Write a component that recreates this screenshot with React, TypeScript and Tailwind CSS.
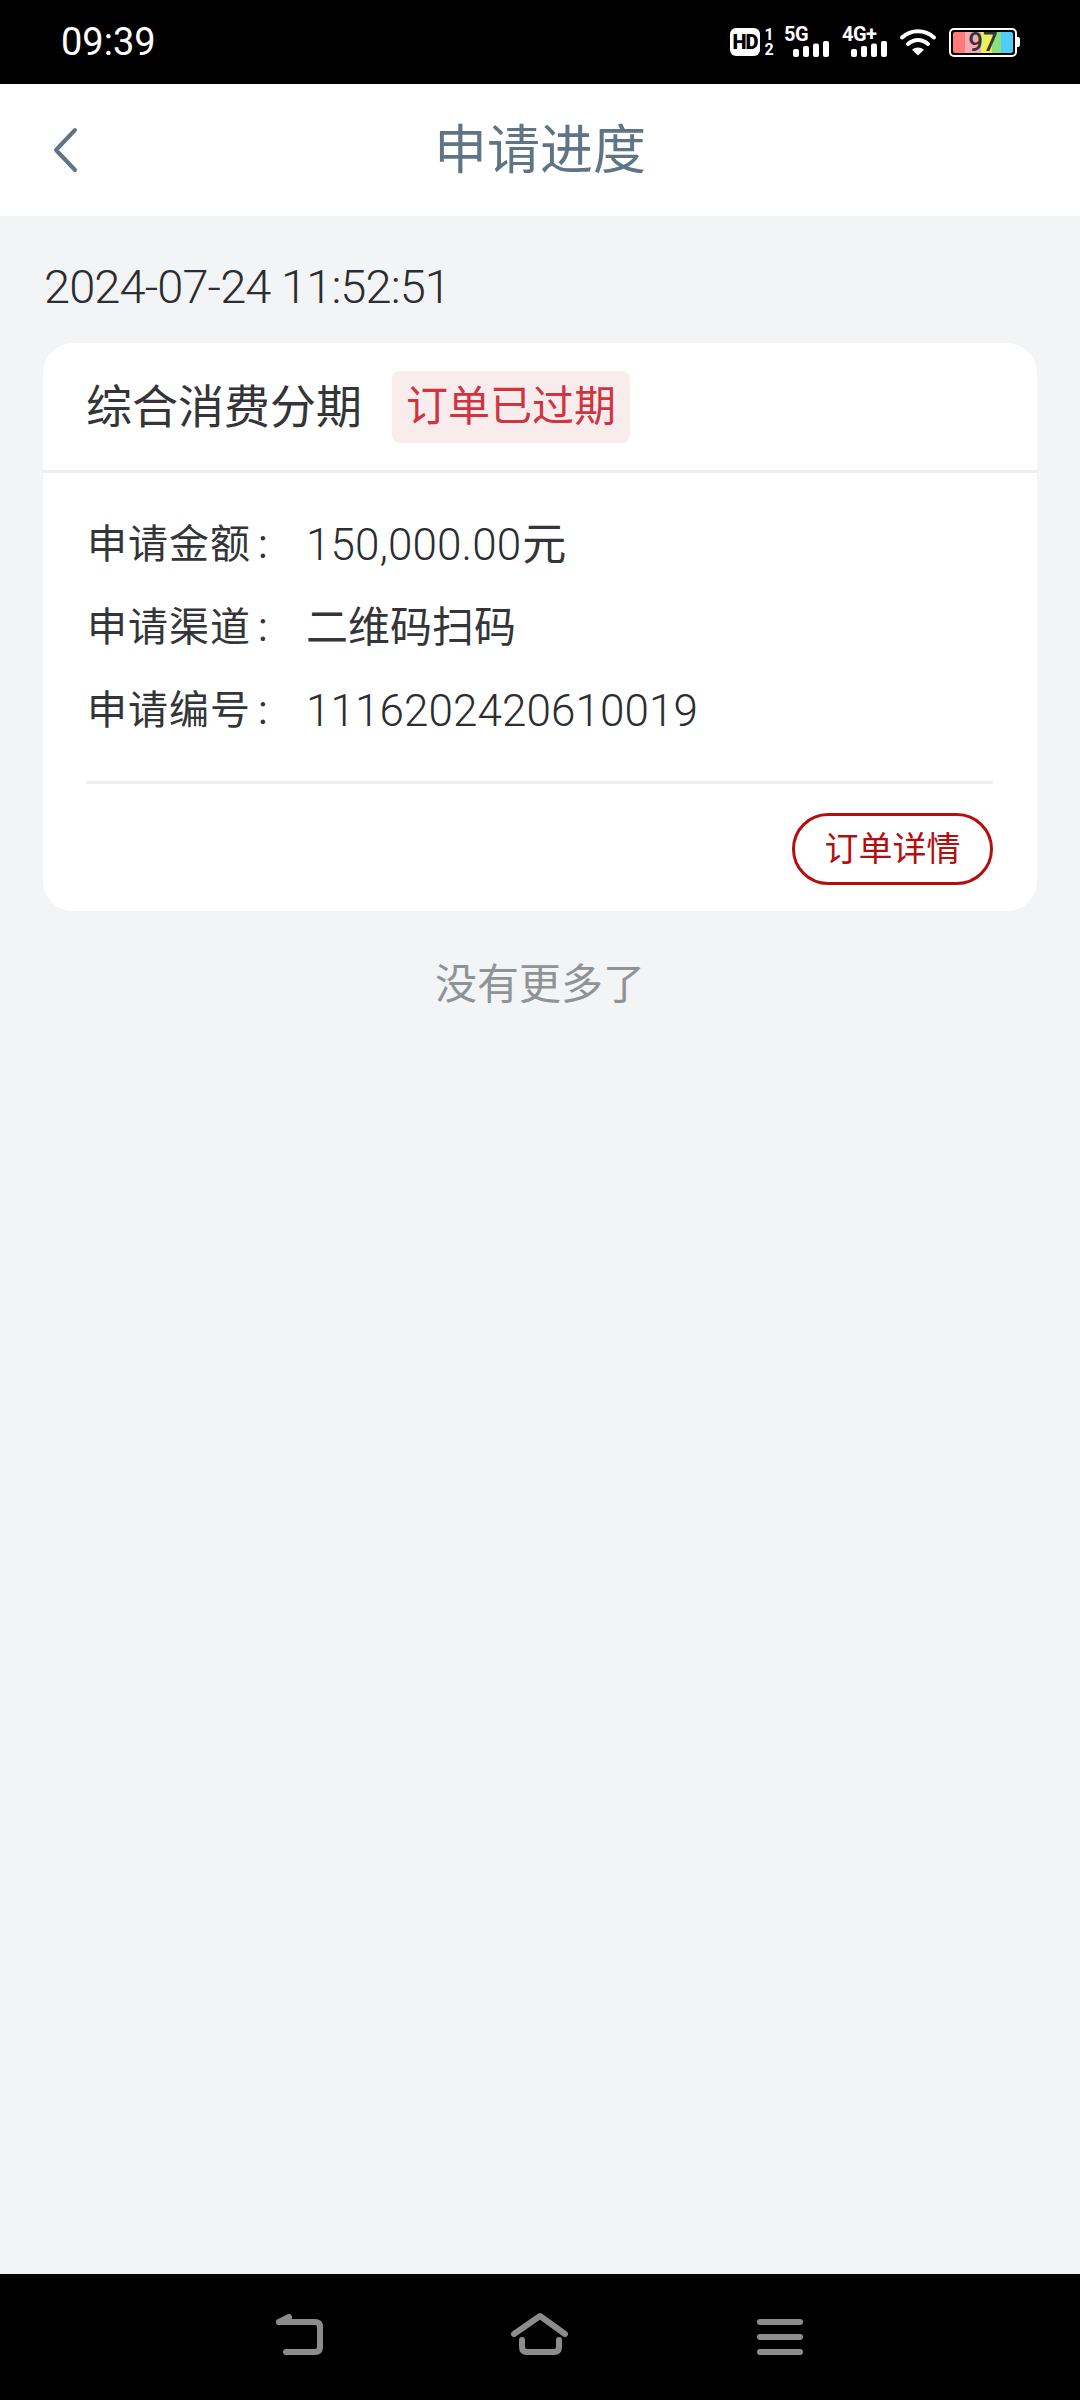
import React from 'react'

const FONT = "font-['Roboto','Noto_Sans_CJK_SC',sans-serif]"

const SignalBars = () => (
  <svg width="36" height="16" viewBox="0 0 36 16" fill="#fff">
    <rect x="0" y="8" width="6" height="8" rx="2" />
    <rect x="10" y="5" width="6" height="11" rx="2" />
    <rect x="20" y="2.5" width="6" height="13.5" rx="2" />
    <rect x="30" y="0" width="6" height="16" rx="2" />
  </svg>
)

const StatusBar = () => (
  <div className="h-[84px] bg-black flex items-center justify-between pl-[61px] pr-[60px] text-white">
    <span className="text-[38px] leading-none mt-[-1px]">09:39</span>
    <div className="flex items-center h-[30px]">
      <div className="w-[30px] h-[28px] ml-[1px] bg-white rounded-[6px] flex items-center justify-center text-black text-[20px] font-black leading-none tracking-[-1px]">
        HD
      </div>
      <div className="w-[10px] ml-[4px] flex flex-col items-center text-[16px] font-bold leading-[15px]">
        <span>1</span>
        <span>2</span>
      </div>
      <div className="w-[46px] ml-[10px] flex flex-col">
        <span className="text-[20px] font-bold leading-[14px] tracking-[-0.5px]">5G</span>
        <div className="ml-[9px] flex">
          <SignalBars />
        </div>
      </div>
      <div className="w-[46px] ml-[12px] flex flex-col">
        <span className="text-[20px] font-bold leading-[14px] tracking-[-0.5px] whitespace-nowrap">4G+</span>
        <div className="ml-[9px] flex">
          <SignalBars />
        </div>
      </div>
      <svg className="ml-[11px]" width="38" height="28" viewBox="0 0 38 28" fill="none" stroke="#fff" strokeWidth="4" strokeLinecap="round">
        <path d="M3 9.5C12 1 26 1 35 9.5" />
        <path d="M9 16C15 10.5 23 10.5 29 16" />
        <path d="M19 27.5L13 21.8C16.5 18.8 21.5 18.8 25 21.8Z" fill="#fff" stroke="none" />
      </svg>
      <div className="ml-[12px] flex items-center">
        <div className="relative w-[68px] h-[29px] border-2 border-white rounded-[5px] p-[2px] flex items-center justify-center">
          <div className="w-full h-full flex rounded-[2px] overflow-hidden">
            <div className="w-[12px] bg-[#ff7b7b]" />
            <div className="w-[16px] bg-[#f5a9b8]" />
            <div className="w-[11px] bg-[#ecef5c]" />
            <div className="w-[9px] bg-[#8ce07a]" />
            <div className="flex-1 bg-[#4fcdf7]" />
          </div>
          <span className="absolute text-[26px] font-medium leading-none text-[#333]">97</span>
        </div>
        <div className="w-[3px] h-[10px] bg-white rounded-r-[2px]" />
      </div>
    </div>
  </div>
)

const Row = ({ label, children }: { label: string; children: React.ReactNode }) => (
  <div className="flex items-center h-[83px] text-[#333538]">
    <span className="w-[220px] pl-[1px] text-[40px] leading-none tracking-[1px]">
      {label}
      <span className="ml-[7px]">:</span>
    </span>
    {children}
  </div>
)

export default function App() {
  return (
    <div className={`${FONT} w-[1080px] h-[2400px] flex flex-col bg-[#f3f4f6]`}>
      <StatusBar />

      <header className="relative h-[132px] bg-white flex items-center justify-center shrink-0">
        <svg className="absolute left-[50px] top-[41px]" width="32" height="50" viewBox="0 0 32 50" fill="none" stroke="#5f7485" strokeWidth="4" strokeLinecap="round" strokeLinejoin="round">
          <path d="M25 5L6 25L25 45" />
        </svg>
        <h1 className="text-[53px] leading-none font-normal text-[#5f7485] mt-[2px]">申请进度</h1>
      </header>

      <main className="flex-1 px-[43px]">
        <div className="h-[127px] pt-[14px] flex items-center pl-[1px] text-[47px] font-light tracking-[-0.9px] leading-none text-[#2b2d30]">
          2024-07-24 11:52:51
        </div>

        <section className="bg-white rounded-[30px] h-[568px] flex flex-col">
          <div className="h-[127px] shrink-0 flex items-center pl-[43px]">
            <span className="text-[46px] leading-none text-[#333538]">综合消费分期</span>
            <span className="ml-[30px] w-[238px] h-[72px] rounded-[8px] bg-[#f9eced] text-[#d0343f] text-[42px] leading-none flex items-center justify-center">
              订单已过期
            </span>
          </div>
          <div className="h-[3px] shrink-0 bg-[#eeeff0]" />
          <div className="px-[43px] flex-1 flex flex-col">
            <div className="pt-[30px]">
              <Row label="申请金额">
                <span className="text-[44px] font-light tracking-[0.1px] leading-none text-[#2b2d30]">150,000.00</span>
                <span className="text-[44px] ml-[1px] leading-none">元</span>
              </Row>
              <Row label="申请渠道">
                <span className="text-[42px] leading-none">二维码扫码</span>
              </Row>
              <Row label="申请编号">
                <span className="text-[44px] font-light tracking-[0.1px] leading-none text-[#2b2d30]">1116202420610019</span>
              </Row>
            </div>
            <div className="h-[3px] mt-[29px] bg-[#eeeff0] mr-[1px]" />
            <div className="flex justify-end pt-[29px] pr-[1px]">
              <button className="w-[201px] h-[72px] rounded-full border-[3px] border-[#b30f0f] text-[#b30f0f] text-[34px] leading-none flex items-center justify-center">
                订单详情
              </button>
            </div>
          </div>
        </section>

        <div className="mt-[42px] text-center text-[42px] leading-[64px] text-[#8f9396]">没有更多了</div>
      </main>

      <nav className="h-[126px] bg-black flex items-start justify-center shrink-0 pt-[36px] pr-[5px]">
        <svg className="mr-[180px]" width="56" height="50" viewBox="0 0 56 50" fill="none" stroke="#8c8c8c" strokeWidth="6" strokeLinecap="round" strokeLinejoin="round">
          <path d="M7 12H43Q48 12 48 17V37Q48 42 43 42H14" />
          <path d="M7 12L17 7" />
        </svg>
        <svg className="mr-[185px]" width="64" height="50" viewBox="0 0 64 50" fill="none" stroke="#8c8c8c" strokeWidth="6" strokeLinecap="round" strokeLinejoin="round">
          <path d="M6 24L32 6L57 24" />
          <path d="M14 30V37Q14 42 19 42H46Q51 42 51 37V30" />
        </svg>
        <div className="w-[46px] mt-[9px] flex flex-col gap-[9px]">
          <div className="h-[6px] rounded-full bg-[#8c8c8c]" />
          <div className="h-[6px] rounded-full bg-[#8c8c8c]" />
          <div className="h-[6px] rounded-full bg-[#8c8c8c]" />
        </div>
      </nav>
    </div>
  )
}
